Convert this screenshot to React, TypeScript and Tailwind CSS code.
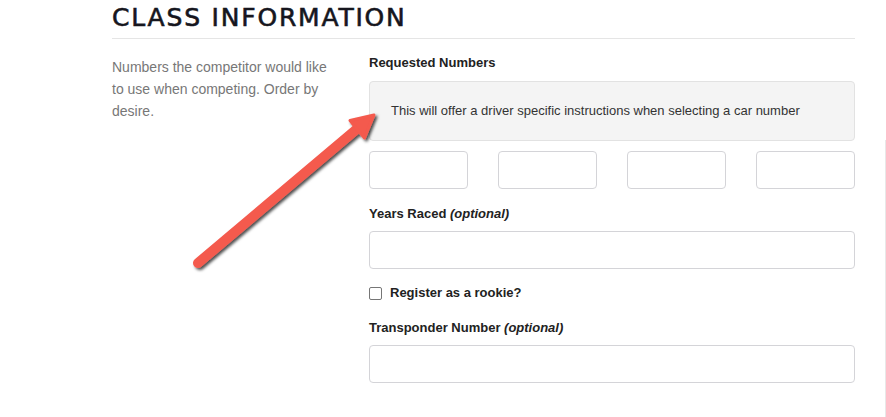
import React from "react";

function Input({ className = "" }: { className?: string }) {
  return <div className={"h-[38px] rounded-[4px] border border-[#d4d4d8] bg-white " + className} />;
}

export default function App() {
  return (
    <div className="relative w-[886px] h-[417px] bg-white overflow-hidden font-['Liberation_Sans',Arial,sans-serif]">
      <div className="ml-[112px] w-[743px]">
        <div className="h-[39px] border-b border-[#e5e5e5]">
          <h1 className="pt-[3px] text-[25px] leading-[30px] font-normal tracking-[1.8px] text-[#16161e] font-['DejaVu_Sans',sans-serif] [-webkit-text-stroke:0.6px_#16161e]">
            CLASS INFORMATION
          </h1>
        </div>
        <div className="flex">
          <div className="w-[257px] pt-[17px]">
            <p className="w-[230px] text-[14px] leading-[22px] text-[#777777]">
              Numbers the competitor would like to use when competing. Order by desire.
            </p>
          </div>
          <div className="w-[486px] pt-[15px]">
            <div className="text-[13px] leading-[18px] font-bold text-[#222]">Requested Numbers</div>
            <div className="mt-[9px] h-[60px] rounded-[4px] border border-[#e2e2e2] bg-[#f4f4f4] flex items-center pl-[21px] text-[13px] text-[#333]">
              This will offer a driver specific instructions when selecting a car number
            </div>
            <div className="mt-[10px] flex justify-between">
              <Input className="w-[99px]" />
              <Input className="w-[99px]" />
              <Input className="w-[99px]" />
              <Input className="w-[99px]" />
            </div>
            <div className="mt-[16px] text-[13px] leading-[18px] font-bold text-[#222]">
              Years Raced <em className="italic">(optional)</em>
            </div>
            <Input className="mt-[8px]" />
            <div className="mt-[15px] h-[18px] flex items-center gap-[8px]">
              <div className="w-[13px] h-[13px] rounded-[2px] border border-[#767676] bg-white" />
              <span className="text-[13px] font-bold text-[#222]">Register as a rookie?</span>
            </div>
            <div className="mt-[17px] text-[13px] leading-[18px] font-bold text-[#222]">
              Transponder Number <em className="italic">(optional)</em>
            </div>
            <Input className="mt-[8px]" />
          </div>
        </div>
      </div>
      <div className="absolute right-0 top-[140px] w-px h-[277px] bg-[#e8e8e8]" />
      <svg className="absolute left-0 top-0 pointer-events-none" width="886" height="417" viewBox="0 0 886 417">
        <defs>
          <filter id="sh" x="-20%" y="-20%" width="140%" height="140%">
            <feDropShadow dx="2" dy="2" stdDeviation="1.6" floodColor="#000" floodOpacity="0.7" />
          </filter>
        </defs>
        <g filter="url(#sh)">
          <line x1="198" y1="263" x2="358" y2="128" stroke="#f45a4e" strokeWidth="10" strokeLinecap="round" />
          <polygon points="374,115 364.5,138 350,120.5" fill="#f45a4e" stroke="#f45a4e" strokeWidth="3" strokeLinejoin="round" />
        </g>
      </svg>
    </div>
  );
}
